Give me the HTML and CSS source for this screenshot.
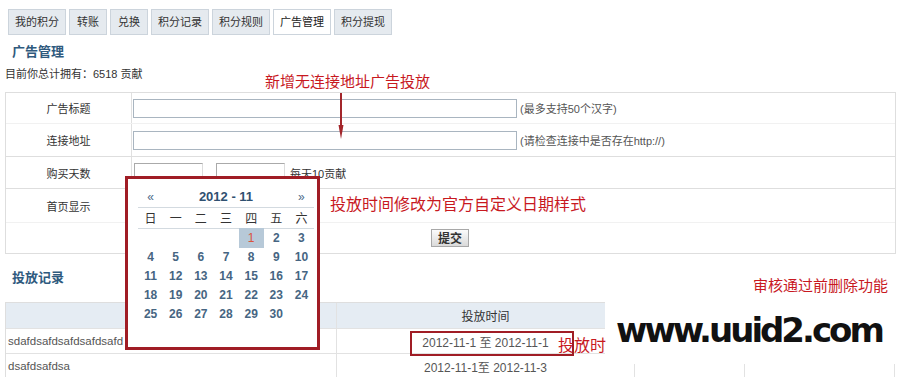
FILE: index.html
```html
<!DOCTYPE html>
<html lang="zh-CN">
<head>
<meta charset="utf-8">
<title>广告管理</title>
<link rel="stylesheet" href="styles.css">
</head>
<body>
<div class="page">
  <ul class="tabs">
    <li class="tab">我的积分</li>
    <li class="tab short">转账</li>
    <li class="tab short">兑换</li>
    <li class="tab">积分记录</li>
    <li class="tab">积分规则</li>
    <li class="tab active">广告管理</li>
    <li class="tab">积分提现</li>
  </ul>
  <h2 class="title">广告管理</h2>
  <p class="info">目前你总计拥有：6518 贡献</p>

  <div class="form">
    <div class="row soft r1">
      <div class="label">广告标题</div>
      <div class="field"><input class="text" type="text"><span class="hint">(最多支持50个汉字)</span></div>
    </div>
    <div class="row r2">
      <div class="label">连接地址</div>
      <div class="field"><input class="text" type="text"><span class="hint">(请检查连接中是否存在http://)</span></div>
    </div>
    <div class="row r3">
      <div class="label">购买天数</div>
      <div class="field"><input class="small" type="text"><input class="small second" type="text"><span class="price">每天10贡献</span></div>
    </div>
    <div class="row soft r4">
      <div class="label">首页显示</div>
      <div class="field"></div>
    </div>
    <div class="row r5">
      <div class="label"></div>
      <div class="field"><button class="submit" type="button">提交</button></div>
    </div>
  </div>

  <h2 class="title sub">投放记录</h2>
  <div class="records">
    <div class="rrow head"><div class="cell c1"></div><div class="cell c2">投放时间</div><div class="cell"></div><div class="cell"></div></div>
    <div class="rrow r-a"><div class="cell c1">sdafdsafdsafdsafdsafd</div><div class="cell c2">2012-11-1 至 2012-11-1</div><div class="cell"></div><div class="cell"></div></div>
    <div class="rrow r-b"><div class="cell c1">dsafdsafdsa</div><div class="cell c2">2012-11-1至 2012-11-3</div><div class="cell"></div><div class="cell"></div></div>
  </div>

  <div class="calendar">
    <div class="cal-head">
      <span class="cal-nav">«</span>
      <span class="cal-title">2012 - 11</span>
      <span class="cal-nav next">»</span>
    </div>
    <div class="cal-week">
      <span>日</span><span>一</span><span>二</span><span>三</span><span>四</span><span>五</span><span>六</span>
    </div>
    <div class="cal-days">
      <span></span><span></span><span></span><span></span><span class="today">1</span><span>2</span><span>3</span>
      <span>4</span><span>5</span><span>6</span><span>7</span><span>8</span><span>9</span><span>10</span>
      <span>11</span><span>12</span><span>13</span><span>14</span><span>15</span><span>16</span><span>17</span>
      <span>18</span><span>19</span><span>20</span><span>21</span><span>22</span><span>23</span><span>24</span>
      <span>25</span><span>26</span><span>27</span><span>28</span><span>29</span><span>30</span><span></span>
    </div>
  </div>

  <div class="note note-add">新增无连接地址广告投放</div>
  <svg class="arrow" width="10" height="48" viewBox="0 0 10 48" aria-hidden="true">
    <line x1="5" y1="0" x2="5" y2="36" stroke="#a3262b" stroke-width="2"/>
    <polygon points="2.5,32 7.5,32 5,46" fill="#a3262b"/>
  </svg>
  <div class="note note-date">投放时间修改为官方自定义日期样式</div>
  <div class="mark-box"></div>
  <div class="note note-del">审核通过前删除功能</div>
  <div class="watermark">www.uuid2.com</div>
  <div class="note note-time">投放时</div>
  <div class="hl-box"></div>
</div>
</body>
</html>
```

FILE: styles.css
```css
* { box-sizing: border-box; }

body {
  margin: 0;
  background: #fff;
  font-family: "Liberation Sans", "Noto Sans CJK SC", sans-serif;
  font-size: 12px;
  color: #333;
}

.page {
  position: relative;
  width: 900px;
  height: 377px;
  overflow: hidden;
}

/* tabs */
.tabs {
  display: flex;
  gap: 3px;
  margin: 0;
  padding: 9px 0 0 8px;
  height: 35px;
  list-style: none;
}
.tab {
  height: 26px;
  line-height: 24px;
  padding: 0 6px;
  border: 1px solid #ccd4dc;
  background: #e5eaef;
  font-size: 11px;
  color: #333;
}
.tab.short { padding: 0 7px; }
.tab.active { background: #fff; color: #222; }

.title {
  margin: 8px 0 0 12px;
  font-size: 13px;
  line-height: 18px;
  font-weight: bold;
  color: #2f5a7e;
}
.title.sub { margin-top: 15px; }

.info {
  margin: 5px 0 0 5px;
  font-size: 11px;
  line-height: 16px;
  color: #333;
}

/* form */
.form {
  margin: 10px 4px 0 5px;
  border: 1px solid #dedede;
}
.row {
  display: grid;
  grid-template-columns: 126px 1fr;
  border-bottom: 1px solid #dedede;
}
.row.soft { border-bottom-color: #f1f1f1; }
.row:last-child { border-bottom: 0; }
.r1 { height: 31px; }
.r2 { height: 33px; }
.r3 { height: 32px; }
.r4 { height: 34px; }
.r5 { height: 30px; }

.label {
  display: flex;
  align-items: center;
  justify-content: center;
  border-right: 1px solid #e0e0e0;
  font-size: 11px;
  color: #333;
}
.field {
  display: flex;
  align-items: center;
  padding-left: 1px;
}
.text {
  width: 384px;
  height: 19px;
  margin: 0;
  padding: 0;
  border: 1px solid #a9b5c0;
  background: #fff;
}
.hint {
  margin-left: 3px;
  font-size: 11px;
  color: #555;
}
.small {
  width: 69px;
  height: 20px;
  margin: 0 0 0 1px;
  padding: 0;
  border: 1px solid #dcdcdc;
  border-top-color: #aaa;
  border-left-color: #aaa;
  background: #fff;
}
.small.second { margin-left: 13px; }
.price {
  margin-left: 5px;
  font-size: 11px;
  color: #333;
}
.submit {
  margin-left: 298px;
  width: 38px;
  height: 18px;
  padding: 0;
  border: 1px solid #a8a8a8;
  background: linear-gradient(#fbfbfb, #dadada);
  font-family: "Noto Sans CJK SC", sans-serif;
  font-size: 12px;
  line-height: 16px;
  font-weight: bold;
  color: #333;
}

/* records */
.records {
  margin: 15px 5px 0 5px;
  border-top: 1px solid #dedede;
  border-left: 1px solid #dedede;
}
.rrow {
  display: grid;
  grid-template-columns: 331px 298px 110px 1fr;
  border-bottom: 1px solid #e2e2e2;
}
.rrow.head { height: 26px; background: #e5ecf3; }
.rrow.r-a { height: 25px; }
.rrow.r-b { height: 25px; }
.cell {
  border-right: 1px solid #e2e2e2;
  display: flex;
  align-items: center;
  color: #555;
  font-size: 12px;
  white-space: nowrap;
}
.c1 { padding-left: 2px; font-size: 11.5px; }
.c2 { justify-content: center; }
.head .c2 { color: #333; }

/* calendar popup */
.calendar {
  position: absolute;
  left: 125px;
  top: 176px;
  width: 195px;
  height: 174px;
  padding: 7px 3px 0 10px;
  border: 3px solid #a01d25;
  background: #fff;
  z-index: 3;
}
.cal-head,
.cal-week,
.cal-days {
  display: grid;
  grid-template-columns: repeat(7, 1fr);
}
.cal-head {
  height: 22px;
  align-items: center;
  border-bottom: 1px solid #d3dae0;
}
.cal-nav {
  text-align: center;
  color: #4a6a88;
  font-size: 12px;
}
.cal-title {
  grid-column: 2 / 7;
  text-align: center;
  font-size: 13px;
  font-weight: bold;
  color: #2f5070;
}
.cal-week {
  height: 21px;
  align-items: center;
  border-bottom: 1px solid #d3dae0;
}
.cal-week span {
  text-align: center;
  font-family: "Noto Sans CJK SC", sans-serif;
  font-size: 12px;
  line-height: 20px;
  color: #333;
}
.cal-days span {
  height: 19px;
  line-height: 19px;
  text-align: center;
  font-size: 12px;
  font-weight: bold;
  color: #466582;
}
.cal-days .today {
  background: #b7c9d8;
  color: #d9533c;
  font-weight: normal;
  height: 20px;
  margin-top: -1px;
  line-height: 21px;
}

/* annotations */
.note {
  position: absolute;
  font-family: "Noto Sans CJK SC", sans-serif;
  color: #c8191f;
  white-space: nowrap;
  z-index: 5;
}
.note-add { left: 265px; top: 72px; font-size: 15px; line-height: 18px; }
.note-date { left: 330px; top: 194px; font-size: 16px; line-height: 18px; }
.note-del { left: 753px; top: 277px; font-size: 15px; line-height: 16px; }
.note-time { left: 558px; top: 335px; font-size: 16px; line-height: 18px; }

.arrow {
  position: absolute;
  left: 336px;
  top: 93px;
  z-index: 5;
}

.mark-box {
  position: absolute;
  left: 605px;
  top: 256px;
  width: 295px;
  height: 108px;
  background: #fff;
  z-index: 4;
}
.watermark {
  position: absolute;
  left: 616px;
  top: 310px;
  font-family: "DejaVu Sans", sans-serif;
  font-size: 34px;
  line-height: 40px;
  font-weight: bold;
  letter-spacing: -3px;
  color: #111;
  z-index: 5;
}
.hl-box {
  position: absolute;
  left: 410px;
  top: 331px;
  width: 164px;
  height: 25px;
  border: 2px solid #a01d25;
  z-index: 5;
}
```
